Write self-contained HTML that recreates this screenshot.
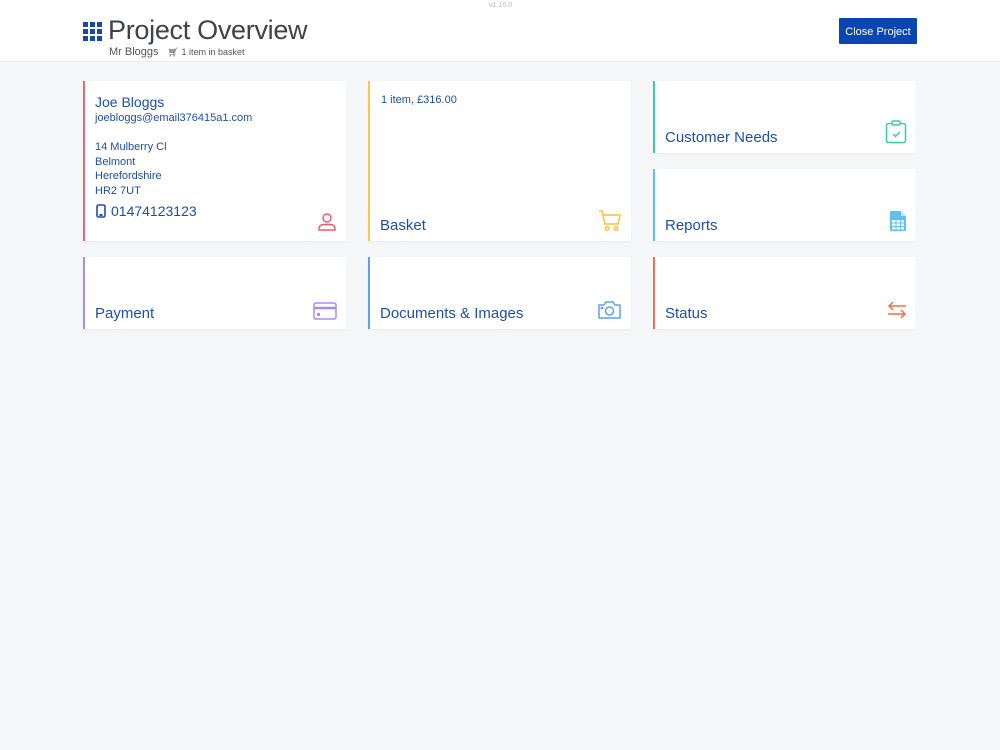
<!DOCTYPE html>
<html><head><meta charset="utf-8"><style>
*{box-sizing:border-box;margin:0;padding:0}
body{width:1000px;height:750px;background:#f5f6f8;font-family:"Liberation Sans",sans-serif;position:relative;overflow:hidden;color:#1d4fa8}
.hdr{position:absolute;left:0;top:0;width:1000px;height:62px;background:#fff;border-bottom:1px solid #eceef1}
.ver{position:absolute;left:489px;top:2px;font-size:7px;color:#bbb}
.grid{position:absolute;left:83px;top:22px;width:19px;height:19px;display:grid;grid-template-columns:repeat(3,5px);gap:2px}
.grid i{background:#1747b0;display:block;width:5px;height:5px}
.title{position:absolute;left:108px;top:15px;font-size:27px;color:#3f4247;letter-spacing:-0.3px}
.sub{position:absolute;left:109px;top:46px;font-size:11px;color:#555}
.sub small{font-size:9px;margin-left:6px}
.btn{position:absolute;left:839px;top:18px;width:78px;height:26px;background:#0b45b2;color:#fff;font-size:11px;text-align:center;line-height:28px;border-radius:1px}
.card{position:absolute;background:#fff;border-left:2px solid;box-shadow:0 1px 2px rgba(0,0,0,.05)}
.lbl{position:absolute;left:10px;bottom:7px;font-size:15px;color:#1d4fa8}
.ic{position:absolute;right:9px;bottom:9px}
.t{position:absolute;font-size:11px}
</style></head><body>
<div class="hdr"></div>
<div class="ver">v1.16.0</div>
<div class="grid"><i></i><i></i><i></i><i></i><i></i><i></i><i></i><i></i><i></i></div>
<div class="title">Project Overview</div>
<div class="sub">Mr Bloggs <small>&#x1F6D2;&#xFE0E; 1 item in basket</small></div>
<div class="btn">Close Project</div>

<div class="card" style="left:83px;top:81px;width:263px;height:160px;border-color:#e86a6f">
 <div class="t" style="left:10px;top:13px;font-size:14px">Joe Bloggs</div>
 <div class="t" style="left:10px;top:31px">joebloggs@email376415a1.com</div>
 <div class="t" style="left:10px;top:59px;line-height:14.7px">14 Mulberry Cl<br>Belmont<br>Herefordshire<br>HR2 7UT</div>
 <svg style="position:absolute;left:11px;top:123px" width="10" height="14" viewBox="0 0 10 14"><rect x="1" y="1" width="8" height="12" rx="1.5" fill="none" stroke="#1d4fa8" stroke-width="1.6"/><rect x="3.5" y="10" width="3" height="2" fill="#1d4fa8"/></svg>
 <div class="t" style="left:26px;top:122px;font-size:14px">01474123123</div>
 <svg class="ic" width="20" height="20" viewBox="0 0 20 20" fill="none" stroke="#ef5a63" stroke-width="1.4"><circle cx="10" cy="6" r="4"/><path d="M2 18v-1.5c0-2.5 2-4 4.5-4h7c2.5 0 4.5 1.5 4.5 4V18z"/></svg>
</div>

<div class="card" style="left:368px;top:81px;width:263px;height:160px;border-color:#f7c94a">
 <div class="t" style="left:11px;top:13px">1 item, £316.00</div>
 <div class="lbl">Basket</div>
 <svg class="ic" width="24" height="22" viewBox="0 0 24 22" fill="none" stroke="#f7c13c" stroke-width="1.5"><path d="M1 1h3l3 13h13l2-9H5"/><circle cx="9" cy="18.5" r="1.8"/><circle cx="18" cy="18.5" r="1.8"/></svg>
</div>

<div class="card" style="left:653px;top:81px;width:263px;height:72px;border-color:#3ccf9c">
 <div class="lbl">Customer Needs</div>
 <svg class="ic" width="22" height="24" viewBox="0 0 22 24" fill="none" stroke="#3ccf9c" stroke-width="1.5"><rect x="1.5" y="3.5" width="19" height="19" rx="2"/><rect x="7" y="1" width="8" height="4" rx="1.2" fill="#fff"/><path d="M8 14l2.5 2.5L15 12"/></svg>
</div>

<div class="card" style="left:653px;top:169px;width:263px;height:72px;border-color:#5ec2ec">
 <div class="lbl">Reports</div>
 <svg class="ic" width="18" height="22" viewBox="0 0 18 22"><path d="M1 2a1 1 0 0 1 1-1h10l5 5v14a1 1 0 0 1-1 1H2a1 1 0 0 1-1-1z" fill="#5ec2ec"/><path d="M12 1v5h5" fill="#fff" opacity=".6"/><g fill="#fff"><rect x="3" y="10" width="3.5" height="2.5"/><rect x="7.5" y="10" width="3.5" height="2.5"/><rect x="12" y="10" width="3" height="2.5"/><rect x="3" y="13.5" width="3.5" height="2.5"/><rect x="7.5" y="13.5" width="3.5" height="2.5"/><rect x="12" y="13.5" width="3" height="2.5"/><rect x="3" y="17" width="3.5" height="2.5"/><rect x="7.5" y="17" width="3.5" height="2.5"/><rect x="12" y="17" width="3" height="2.5"/></g></svg>
</div>

<div class="card" style="left:83px;top:257px;width:263px;height:72px;border-color:#a98bf5">
 <div class="lbl">Payment</div>
 <svg class="ic" width="24" height="18" viewBox="0 0 24 18" fill="none" stroke="#a98bf5" stroke-width="1.5"><rect x="1" y="1" width="22" height="16" rx="2"/><path d="M1 6h22" stroke-width="2.5"/><rect x="4" y="11" width="3" height="3" fill="#a98bf5" stroke="none"/></svg>
</div>

<div class="card" style="left:368px;top:257px;width:263px;height:72px;border-color:#5f9ef3">
 <div class="lbl">Documents &amp; Images</div>
 <svg class="ic" width="25" height="20" viewBox="0 0 25 20" fill="none" stroke="#5f9ef3" stroke-width="1.5"><path d="M2 5h5l2-3h7l2 3h5v13H2z" stroke-linejoin="round"/><circle cx="12.5" cy="11" r="4"/><circle cx="5" cy="8" r=".6" fill="#5f9ef3"/></svg>
</div>

<div class="card" style="left:653px;top:257px;width:263px;height:72px;border-color:#f46b4f">
 <div class="lbl">Status</div>
 <svg class="ic" width="20" height="20" viewBox="0 0 20 20" fill="none" stroke="#f46b4f" stroke-width="1.5"><path d="M19 6H2M6 2L2 6l4 4M1 14h17M14 10l4 4-4 4"/></svg>
</div>
</body></html>
